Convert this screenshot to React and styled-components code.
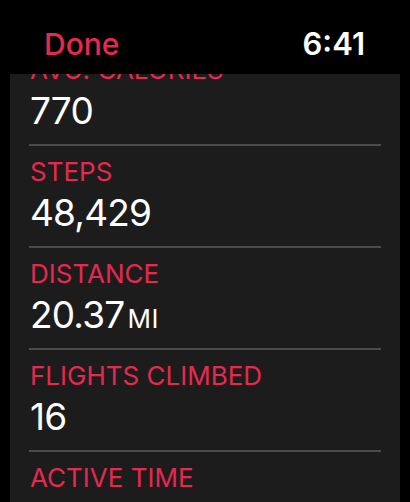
import styled, { createGlobalStyle } from "styled-components";

const GlobalStyle = createGlobalStyle`
    html, body {
        margin: 0;
        padding: 0;
        background: #000;
    }
    body {
        font-family: Inter, "Noto Sans", sans-serif;
        -webkit-font-smoothing: antialiased;
    }
`;

const Screen = styled.div`
    width: 410px;
    height: 502px;
    display: flex;
    flex-direction: column;
    background: #000;
    overflow: hidden;
`;

const Header = styled.header`
    height: 74px;
    flex-shrink: 0;
    box-sizing: border-box;
    padding: 25px 45px 0 44px;
    display: flex;
    justify-content: space-between;
    align-items: flex-start;
`;

const HeaderText = styled.span`
    font-size: ${(props) => props.size || 30}px;
    line-height: 38px;
    font-weight: ${(props) => props.weight || 500};
    color: ${(props) => props.color};
`;

const Card = styled.main`
    flex: 1;
    margin: 0 10px;
    background: #1c1c1c;
    overflow: hidden;
`;

const List = styled.div`
    margin-top: -30px;
    padding: 0 19px;
    display: flex;
    flex-direction: column;
`;

const Row = styled.section`
    padding: 10px 1px 8px;
    border-bottom: 2px solid #4a4a4a;
`;

const Label = styled.div`
    font-size: 26px;
    line-height: 32px;
    color: #e5294f;
`;

const Value = styled.div`
    font-size: 37px;
    line-height: 50px;
    height: 50px;
    color: #fff;
    letter-spacing: -0.8px;
`;

const Unit = styled.span`
    font-size: 26px;
    line-height: 0;
    letter-spacing: 0.6px;
    margin-left: 3px;
`;

const stats = [
    { label: "AVG. CALORIES", value: "770" },
    { label: "STEPS", value: "48,429" },
    { label: "DISTANCE", value: "20.37", unit: "MI" },
    { label: "FLIGHTS CLIMBED", value: "16" },
    { label: "ACTIVE TIME", value: "3:52:10" },
];

export default function App() {
    return (
        <>
            <GlobalStyle />
            <Screen>
                <Header>
                    <HeaderText color="#e5294f">Done</HeaderText>
                    <HeaderText color="#fff" weight={600} size={31}>6:41</HeaderText>
                </Header>
                <Card>
                    <List>
                        {stats.map((s) => (
                            <Row key={s.label}>
                                <Label>{s.label}</Label>
                                <Value>
                                    {s.value}
                                    {s.unit && <Unit>{s.unit}</Unit>}
                                </Value>
                            </Row>
                        ))}
                    </List>
                </Card>
            </Screen>
        </>
    );
}
